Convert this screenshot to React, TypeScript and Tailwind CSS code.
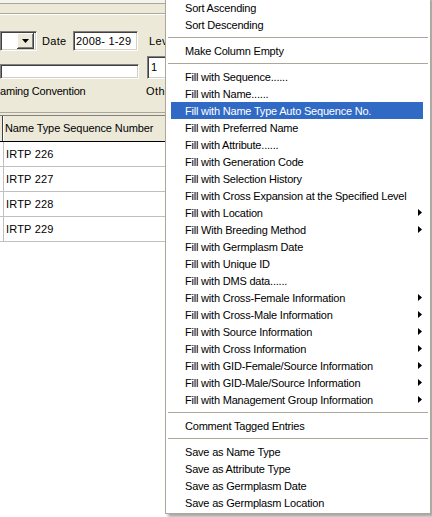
import React from 'react'

type MenuEntry = { label: string; sub?: boolean; active?: boolean } | 'sep'

const menuEntries: MenuEntry[] = [
  { label: 'Sort Ascending' },
  { label: 'Sort Descending' },
  'sep',
  { label: 'Make Column Empty' },
  'sep',
  { label: 'Fill with Sequence......' },
  { label: 'Fill with Name......' },
  { label: 'Fill with Name Type Auto Sequence No.', active: true },
  { label: 'Fill with Preferred Name' },
  { label: 'Fill with Attribute......' },
  { label: 'Fill with Generation Code' },
  { label: 'Fill with Selection History' },
  { label: 'Fill with Cross Expansion at the Specified Level' },
  { label: 'Fill with Location', sub: true },
  { label: 'Fill With Breeding Method', sub: true },
  { label: 'Fill with Germplasm Date' },
  { label: 'Fill with Unique ID' },
  { label: 'Fill with DMS data......' },
  { label: 'Fill with Cross-Female Information', sub: true },
  { label: 'Fill with Cross-Male Information', sub: true },
  { label: 'Fill with Source Information', sub: true },
  { label: 'Fill with Cross Information', sub: true },
  { label: 'Fill with GID-Female/Source Information', sub: true },
  { label: 'Fill with GID-Male/Source Information', sub: true },
  { label: 'Fill with Management Group Information', sub: true },
  'sep',
  { label: 'Comment Tagged Entries' },
  'sep',
  { label: 'Save as Name Type' },
  { label: 'Save as Attribute Type' },
  { label: 'Save as Germplasm Date' },
  { label: 'Save as Germplasm Location' },
]

const rows = ['IRTP 226', 'IRTP 227', 'IRTP 228', 'IRTP 229']

// classic sunken 3D edit box
const sunken =
  'bg-white border-t border-l border-t-[#808080] border-l-[#808080] border-b border-r border-b-[#ffffff] border-r-[#ffffff] shadow-[inset_1px_1px_0_#404040,inset_-1px_-1px_0_#d4d0c8]'

function ContextMenu() {
  return (
    <div className="absolute left-[165px] top-[-4px] w-[266px] bg-white border border-[#aca899] py-[2px] shadow-[3px_3px_3px_rgba(0,0,0,0.35)] font-['Liberation_Sans',sans-serif] text-[11px] tracking-[-0.2px] text-black">
      {menuEntries.map((entry, i) => {
        if (entry === 'sep') {
          return (
            <div key={i} className="h-[9px] flex items-center px-[2px]">
              <div className="h-px w-full bg-[#aca899]" />
            </div>
          )
        }
        return (
          <div
            key={i}
            className={`h-[17px] ml-[5px] mr-[7px] flex items-center pl-[14px] ${
              entry.active ? 'bg-[#316ac5] text-white' : ''
            }`}
          >
            <span className="flex-1 whitespace-nowrap pt-px">{entry.label}</span>
            {entry.sub && (
              <svg width="4" height="7" viewBox="0 0 4 7" className="mr-[1px]">
                <path d="M0 0 L4 3.5 L0 7 Z" fill="black" />
              </svg>
            )}
          </div>
        )
      })}
    </div>
  )
}

export default function App() {
  return (
    <div className="relative w-[432px] h-[517px] overflow-hidden bg-white font-['Liberation_Sans',sans-serif] text-[11px] text-black">
      {/* window behind the menu */}
      <div className="flex flex-col h-full w-[166px] overflow-hidden bg-[#ece9d8]">
        <div className="h-[3px] bg-[#f4f3ec]" />
        <div className="h-px bg-[#aca899]" />
        <div className="h-[9px]" />
        <div className="h-px bg-[#aca899]" />
        <div className="h-px bg-white" />

        {/* row 1 */}
        <div className="mt-[16px] h-[20px] flex items-center whitespace-nowrap">
          <div className={`shrink-0 h-[20px] w-[37px] flex items-center justify-end pr-[2px] ${sunken}`}>
            <div className="h-[16px] w-[17px] bg-[#ece9d8] flex items-center justify-center shadow-[inset_-1px_-1px_0_#404040,inset_1px_1px_0_#ffffff,inset_-2px_-2px_0_#808080]">
              <svg width="7" height="4" viewBox="0 0 7 4">
                <path d="M0 0 H7 L3.5 4 Z" fill="black" />
              </svg>
            </div>
          </div>
          <span className="ml-[5px] w-[31px] shrink-0 tracking-[0.3px]">Date</span>
          <div className={`shrink-0 h-[20px] w-[65px] flex items-center pl-[2px] ${sunken}`}>
            <span className="tracking-[0.2px]">2008- 1-29</span>
          </div>
          <span className="ml-[11px] tracking-[0.4px]">Level</span>
        </div>

        {/* row 2 */}
        <div className="mt-[5px] h-[23px] flex items-end">
          <div className={`shrink-0 h-[15px] w-[139px] ${sunken}`} />
          <div className={`shrink-0 ml-[8px] h-[23px] w-[30px] flex items-center pl-[3px] ${sunken}`}>
            <span>1</span>
          </div>
        </div>

        {/* row 3 */}
        <div className="mt-[5px] h-[14px] flex items-center whitespace-nowrap">
          <span className="w-[146px] shrink-0 tracking-[-0.2px]">aming Convention</span>
          <span className="tracking-[0.4px]">Other</span>
        </div>

        {/* grid */}
        <div className="mt-[14px] h-px bg-[#aca899]" />
        <div className="h-[2px]" />
        <div className="h-px bg-[#808080]" />
        <div className="h-[26px] flex items-stretch bg-[#ece9d8] border-b border-black whitespace-nowrap">
          <div className="w-[3px] border-r border-[#404040]" />
          <div className="flex items-center pl-[1px] border-l border-white tracking-[-0.1px]">
            Name Type Sequence Number
          </div>
        </div>
        <div className="flex-1 bg-white">
          {rows.map((r) => (
            <div key={r} className="h-[25px] flex items-stretch border-b border-[#c0c0c0]">
              <div className="w-[4px] border-r border-[#c0c0c0]" />
              <div className="flex items-center pl-[2px] tracking-[0.2px]">{r}</div>
            </div>
          ))}
        </div>
      </div>

      <ContextMenu />
    </div>
  )
}
